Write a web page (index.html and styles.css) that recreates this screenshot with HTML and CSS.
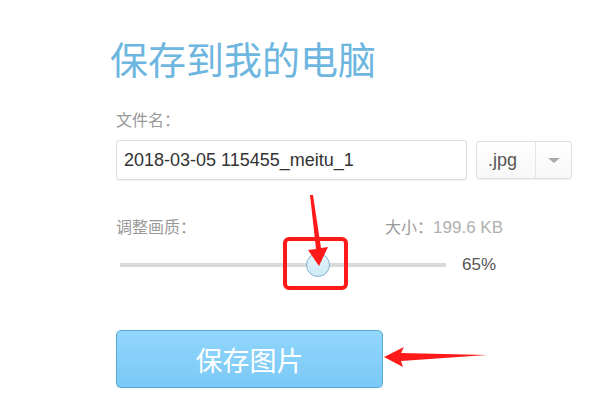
FILE: index.html
```html
<!DOCTYPE html>
<html lang="zh-CN">
<head>
    <meta charset="UTF-8">
    <title>保存到我的电脑</title>
    <link rel="stylesheet" href="styles.css">
</head>
<body>
    <div class="page">
        <h1 class="title">保存到我的电脑</h1>
        <div class="label">文件名：</div>
        <div class="file-row">
            <div class="name-input">2018-03-05 115455_meitu_1</div>
            <div class="format-select">
                <span class="fmt">.jpg</span>
                <span class="caret-box"><span class="caret"></span></span>
            </div>
        </div>
        <div class="quality-head">
            <span class="label">调整画质：</span>
            <span class="label">大小：<span class="size-val">199.6 KB</span></span>
        </div>
        <div class="slider-row">
            <div class="track">
                <div class="thumb" style="left: 60.7%"></div>
            </div>
            <span class="pct">65%</span>
        </div>
        <button class="save-btn">保存图片</button>
    </div>
    <svg class="marks" width="601" height="401" viewBox="0 0 601 401">
        <rect x="285" y="239" width="61" height="49" rx="4" fill="none" stroke="#ff1a1a" stroke-width="4"/>
        <polygon points="310,195 313,195 321,248 328,247 319,266 308,250 316,249" fill="#ff1a1a"/>
        <polygon points="384,357 404,347 401,353 487,355 401,361 403,367" fill="#ff1a1a"/>
    </svg>
</body>
</html>
```

FILE: styles.css
```css
body, html {
    margin: 0;
    padding: 0;
    background-color: #ffffff;
    font-family: "Liberation Sans", "Noto Sans CJK SC", sans-serif;
}
.page {
    width: 456px;
    padding: 36px 0 0 116px;
    display: flex;
    flex-direction: column;
}
.title {
    margin: 0 0 0 -6px;
    font-family: "Noto Sans CJK SC", sans-serif;
    font-weight: 400;
    font-size: 38px;
    line-height: 44px;
    color: #6db6e0;
}
.label {
    font-family: "Noto Sans CJK SC", sans-serif;
    font-size: 16px;
    line-height: 20px;
    color: #999999;
}
.page > .label {
    margin-top: 29px;
}
.file-row {
    display: flex;
    gap: 9px;
    margin-top: 11px;
}
.name-input {
    flex: 1;
    height: 38px;
    line-height: 38px;
    padding: 0 7px;
    border: 1px solid #dddddd;
    border-radius: 3px;
    box-shadow: 0 1px 1px rgba(0, 0, 0, 0.05);
    font-size: 18px;
    color: #333333;
}
.format-select {
    width: 94px;
    height: 36px;
    margin-top: 1px;
    display: flex;
    border: 1px solid #e0e0e0;
    border-radius: 3px;
    background: linear-gradient(#ffffff, #f7f7f7);
    box-shadow: 0 1px 1px rgba(0, 0, 0, 0.06);
}
.fmt {
    width: 59px;
    padding-left: 11px;
    box-sizing: border-box;
    line-height: 36px;
    font-size: 18px;
    color: #555555;
    border-right: 1px solid #e6e6e6;
}
.caret-box {
    flex: 1;
    display: flex;
    align-items: center;
    justify-content: center;
}
.caret {
    width: 0;
    height: 0;
    border-left: 6px solid transparent;
    border-right: 6px solid transparent;
    border-top: 5px solid #aaaaaa;
}
.quality-head {
    width: 387px;
    height: 20px;
    margin-top: 36px;
    display: flex;
    justify-content: space-between;
    align-items: baseline;
}
.size-val {
    font-family: "Liberation Sans", sans-serif;
    font-size: 17px;
    color: #b0b0b0;
}
.slider-row {
    display: flex;
    align-items: center;
    gap: 16px;
    margin-top: 17px;
    height: 24px;
}
.track {
    position: relative;
    width: 326px;
    height: 4px;
    margin-left: 4px;
    background-color: #d9d9d9;
}
.thumb {
    position: absolute;
    top: -10px;
    width: 24px;
    height: 24px;
    margin-left: -12px;
    box-sizing: border-box;
    border: 1px solid #7fb2cc;
    border-radius: 50%;
    background: linear-gradient(#e6f5fc, #cde9f6);
}
.pct {
    font-size: 17px;
    color: #555555;
}
.save-btn {
    width: 267px;
    height: 58px;
    margin-top: 53px;
    padding: 0;
    border: 1px solid #55abd6;
    border-radius: 5px;
    background: linear-gradient(#92d6fc, #7ac9f6);
    box-shadow: 0 2px 0 #d6ecf7;
    font-family: "Noto Sans CJK SC", sans-serif;
    font-size: 27px;
    color: #ffffff;
    cursor: pointer;
}
.marks {
    position: absolute;
    left: 0;
    top: 0;
    pointer-events: none;
}
```
